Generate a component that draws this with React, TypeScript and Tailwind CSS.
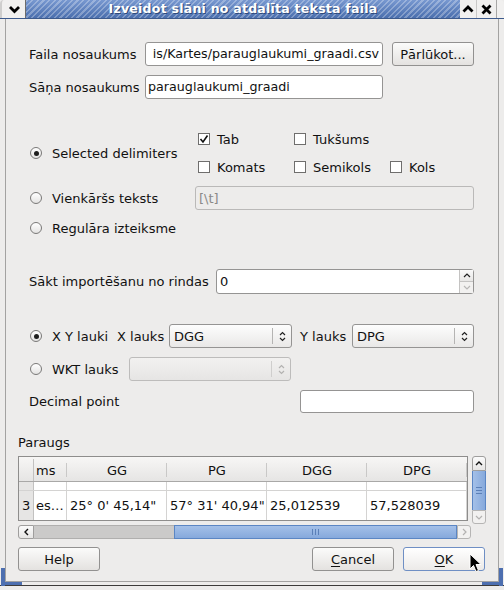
import React from "react";

const FONT = "font-['DejaVu_Sans',sans-serif]";

function Radio({ checked }: { checked?: boolean }) {
  return (
    <span className="ml-[1px] w-[12px] h-[12px] shrink-0 rounded-full border border-[#7a7978] bg-gradient-to-b from-[#ffffff] to-[#e4e3e2] flex items-center justify-center">
      {checked && <span className="w-[5px] h-[5px] rounded-full bg-[#1e1e1e]" />}
    </span>
  );
}

function Check({ checked, label }: { checked?: boolean; label: string }) {
  return (
    <div className="w-[96px] shrink-0 flex items-center">
      <span className="w-[12px] h-[12px] shrink-0 border border-[#6f6e6d] bg-white flex items-center justify-center">
        {checked && (
          <svg width="10" height="10" viewBox="0 0 10 10">
            <path d="M1.5 5 L4 8 L8.5 1.5" stroke="#111" strokeWidth="1.6" fill="none" />
          </svg>
        )}
      </span>
      <span className="ml-[7px]">{label}</span>
    </div>
  );
}

function UpDown({ color = "#222" }: { color?: string }) {
  return (
    <svg width="7" height="11" viewBox="0 0 7 11">
      <path d="M1 4 L3.5 1.5 L6 4 M1 7 L3.5 9.5 L6 7" stroke={color} strokeWidth="1.2" fill="none" />
    </svg>
  );
}

function Combo({ w, text, disabled }: { w: string; text?: string; disabled?: boolean }) {
  return (
    <div
      className={`${w} shrink-0 h-[24px] rounded-[3px] border flex items-center ${
        disabled
          ? "border-[#bdbcbb] bg-gradient-to-b from-[#f2f1f0] to-[#e6e5e4]"
          : "border-[#959493] bg-gradient-to-b from-[#fdfdfd] to-[#e9e8e7]"
      }`}
    >
      <span className="flex-1 pl-[4px]">{text}</span>
      <span className={`w-px h-[16px] ${disabled ? "bg-[#cfcecd]" : "bg-[#b5b4b3]"}`} />
      <span className="w-[18px] flex justify-center">
        <UpDown color={disabled ? "#b3b2b1" : "#222"} />
      </span>
    </div>
  );
}

function Btn({ w, children, focus }: { w: string; children: React.ReactNode; focus?: boolean }) {
  return (
    <div
      className={`${w} h-[24px] rounded-[3px] border flex items-center justify-center ${
        focus
          ? "border-[#6f8fc4] bg-gradient-to-b from-[#ffffff] to-[#eceae8]"
          : "border-[#929190] bg-gradient-to-b from-[#fbfbfa] to-[#e4e2e0]"
      }`}
    >
      {children}
    </div>
  );
}

function Cursor() {
  return (
    <svg className="absolute left-[469px] top-[553px]" width="13" height="20" viewBox="0 0 13 20">
      <path d="M1 1 L1 16 L4.5 12.5 L7 18.5 L9.5 17.5 L7 11.5 L12 11.5 Z" fill="#000" stroke="#fff" strokeWidth="1" />
    </svg>
  );
}

export default function App() {
  return (
    <div className={`${FONT} relative w-[504px] h-[590px] bg-[#edeceb] text-[13px] text-[#111] overflow-hidden flex flex-col leading-none`}>
      {/* title bar */}
      <div className="h-[19px] flex shrink-0 border-b border-[#3d5a8c]">
        <div className="w-[26px] bg-[#f1f0ef] border-r border-[#6d6c6b] flex items-center justify-end pr-[4px] rounded-tl-[4px] border-l-[2px] border-l-[#cfcecd]">
          <svg width="13" height="9" viewBox="0 0 13 9">
            <path d="M2 2 L6.5 6.5 L11 2" stroke="#000" strokeWidth="2.8" fill="none" />
          </svg>
        </div>
        <div className="flex-1 flex items-center justify-center bg-[repeating-linear-gradient(135deg,rgba(255,255,255,0.28)_0px,rgba(255,255,255,0.28)_1.5px,transparent_1.5px,transparent_4px),linear-gradient(#7898d0,#4b6fae)]">
          <span className="text-white font-bold text-[12.5px] tracking-[0.25px] [text-shadow:1px_1px_0_#2e4a7c]">
            Izveidot slāni no atdalīta teksta faila
          </span>
        </div>
        <div className="w-[44px] bg-[#f1f0ef] flex rounded-tr-[4px]">
          <div className="w-[17px] flex items-center justify-center border-r border-[#c9c8c7]">
            <svg width="12" height="8" viewBox="0 0 12 8">
              <path d="M1.5 6.5 L6 2 L10.5 6.5" stroke="#000" strokeWidth="2.8" fill="none" />
            </svg>
          </div>
          <div className="w-[20px] flex items-center justify-center border-r border-[#a8a7a6]">
            <svg width="11" height="11" viewBox="0 0 11 11">
              <path d="M1.5 1.5 L9.5 9.5 M9.5 1.5 L1.5 9.5" stroke="#000" strokeWidth="2.8" fill="none" />
            </svg>
          </div>
        </div>
      </div>

      {/* body */}
      <div className="mx-[5px] h-[563px] border-x border-b border-[#a3a2a1] flex flex-col">
        <div className="px-[23px] flex flex-col">
          {/* file row */}
          <div className="mt-[23px] h-[24px] flex items-center">
            <span className="w-[116px] shrink-0">Faila nosaukums</span>
            <div className="w-[238px] shrink-0 h-[24px] rounded-[3px] border border-[#959493] bg-white flex items-center justify-end overflow-hidden pr-[3px] text-[12.7px]">
              <span className="whitespace-nowrap">is/Kartes/parauglaukumi_graadi.csv</span>
            </div>
            <div className="ml-[9px]">
              <Btn w="w-[82px]">Pārlūkot...</Btn>
            </div>
          </div>
          {/* layer name */}
          <div className="mt-[9px] h-[24px] flex items-center">
            <span className="w-[116px] shrink-0">Sāņa nosaukums</span>
            <div className="w-[238px] shrink-0 h-[24px] rounded-[3px] border border-[#959493] bg-white flex items-center pl-[2px] text-[12.7px]">
              <span>parauglaukumi_graadi</span>
            </div>
          </div>

          {/* delimiters */}
          <div className="mt-[31px] flex items-center">
            <div className="w-[169px] shrink-0 flex items-center">
              <Radio checked />
              <span className="ml-[10px]">Selected delimiters</span>
            </div>
            <div className="flex flex-col">
              <div className="h-[18px] flex items-center">
                <Check checked label="Tab" />
                <Check label="Tukšums" />
              </div>
              <div className="mt-[10px] h-[18px] flex items-center">
                <Check label="Komats" />
                <Check label="Semikols" />
                <div className="flex items-center">
                  <span className="w-[12px] h-[12px] shrink-0 border border-[#6f6e6d] bg-white" />
                  <span className="ml-[7px]">Kols</span>
                </div>
              </div>
            </div>
          </div>
          <div className="mt-[10px] h-[24px] flex items-center">
            <div className="w-[166px] shrink-0 flex items-center">
              <Radio />
              <span className="ml-[10px]">Vienkāršs teksts</span>
            </div>
            <div className="w-[279px] shrink-0 h-[24px] rounded-[3px] border border-[#bab9b8] bg-[#edeceb] flex items-center pl-[3px] text-[#8a8988]">
              [\t]
            </div>
          </div>
          <div className="mt-[8px] h-[20px] flex items-center">
            <Radio />
            <span className="ml-[10px]">Regulāra izteiksme</span>
          </div>

          {/* start row */}
          <div className="mt-[31px] h-[25px] flex items-center">
            <span className="w-[187px] shrink-0">Sākt importēšanu no rindas</span>
            <div className="w-[258px] shrink-0 h-[25px] rounded-[3px] border border-[#959493] bg-white flex items-stretch">
              <span className="flex-1 flex items-center pl-[3px]">0</span>
              <div className="w-[14px] flex flex-col border-l border-[#c4c3c2]">
                <div className="flex-1 flex items-center justify-center bg-gradient-to-b from-[#fafafa] to-[#e8e7e6] border-b border-[#c4c3c2]">
                  <svg width="8" height="5" viewBox="0 0 8 5">
                    <path d="M1 4 L4 1 L7 4" stroke="#222" strokeWidth="1.2" fill="none" />
                  </svg>
                </div>
                <div className="flex-1 flex items-center justify-center bg-[#f2f1f0]">
                  <svg width="8" height="5" viewBox="0 0 8 5">
                    <path d="M1 1 L4 4 L7 1" stroke="#b8b7b6" strokeWidth="1.2" fill="none" />
                  </svg>
                </div>
              </div>
            </div>
          </div>

          {/* XY row */}
          <div className="mt-[30px] h-[24px] flex items-center">
            <div className="w-[88px] shrink-0 flex items-center">
              <Radio checked />
              <span className="ml-[10px]">X Y lauki</span>
            </div>
            <span className="w-[52px] shrink-0">X lauks</span>
            <Combo w="w-[123px]" text="DGG" />
            <span className="w-[60px] shrink-0 pl-[8px]">Y lauks</span>
            <Combo w="w-[122px]" text="DPG" />
          </div>
          <div className="mt-[9px] h-[24px] flex items-center">
            <div className="w-[100px] shrink-0 flex items-center">
              <Radio />
              <span className="ml-[10px]">WKT lauks</span>
            </div>
            <Combo w="w-[162px]" disabled />
          </div>
          <div className="mt-[9px] h-[23px] flex items-center">
            <span className="w-[271px] shrink-0">Decimal point</span>
            <div className="w-[174px] shrink-0 h-[23px] rounded-[3px] border border-[#959493] bg-white" />
          </div>
        </div>

        {/* preview */}
        <div className="px-[12px] flex flex-col">
          <div className="mt-[21px] h-[16px] flex items-center">Paraugs</div>
          <div className="mt-[6px] h-[68px] flex">
            {/* table */}
            <div className="w-[450px] h-[65px] border border-[#8e8d8c] bg-white flex flex-col overflow-hidden">
              <div className="h-[25px] pt-[2px] flex border-b border-[#a9a8a7] bg-gradient-to-b from-[#f7f6f5] to-[#e6e5e4]">
                <div className="w-[15px] border-r border-[#c2c1c0]" />
                <div className="w-[33px] flex items-center pl-[2px] relative">
                  ms
                  <span className="absolute right-0 top-[4px] bottom-[4px] w-px bg-[#c9c8c7]" />
                </div>
                {["GG", "PG", "DGG", "DPG"].map((h) => (
                  <div key={h} className="w-[100px] flex items-center justify-center relative">
                    {h}
                    <span className="absolute right-0 top-[4px] bottom-[4px] w-px bg-[#c9c8c7]" />
                  </div>
                ))}
              </div>
              <div className="h-[9px] flex border-b border-[#d4d3d2]">
                <div className="w-[15px] bg-[#e6e5e4] border-r border-[#c2c1c0]" />
                <div className="w-[33px] border-r border-[#d4d3d2]" />
                <div className="w-[100px] border-r border-[#d4d3d2]" />
                <div className="w-[100px] border-r border-[#d4d3d2]" />
                <div className="w-[100px] border-r border-[#d4d3d2]" />
                <div className="w-[100px] border-r border-[#d4d3d2]" />
              </div>
              <div className="flex-1 flex">
                <div className="w-[15px] bg-[#e6e5e4] border-r border-[#c2c1c0] flex items-center pl-[3px]">3</div>
                <div className="w-[33px] border-r border-[#d4d3d2] flex items-center pl-[2px]">
                  <span className="whitespace-nowrap">es…</span>
                </div>
                <div className="w-[100px] border-r border-[#d4d3d2] flex items-center pl-[3px] whitespace-nowrap">25° 0' 45,14"</div>
                <div className="w-[100px] border-r border-[#d4d3d2] flex items-center pl-[3px] whitespace-nowrap">57° 31' 40,94"</div>
                <div className="w-[100px] border-r border-[#d4d3d2] flex items-center pl-[3px]">25,012539</div>
                <div className="w-[100px] border-r border-[#d4d3d2] flex items-center pl-[3px]">57,528039</div>
              </div>
            </div>
            {/* vertical scrollbar */}
            <div className="ml-[4px] w-[14px] h-[68px] flex flex-col">
              <div className="h-[15px] rounded-t-[3px] border border-[#9f9e9d] bg-gradient-to-b from-[#fbfbfb] to-[#e6e5e4] flex items-center justify-center">
                <svg width="8" height="5" viewBox="0 0 8 5">
                  <path d="M1 4 L4 1 L7 4" stroke="#111" strokeWidth="1.4" fill="none" />
                </svg>
              </div>
              <div className="h-[39px] border-x border-[#5b86c4] bg-gradient-to-r from-[#a4c0e8] to-[#86a9dc] flex flex-col items-center justify-center gap-[2px]">
                <span className="w-[6px] h-px bg-[#5b80b8]" />
                <span className="w-[6px] h-px bg-[#5b80b8]" />
                <span className="w-[6px] h-px bg-[#5b80b8]" />
              </div>
              <div className="h-[14px] rounded-b-[3px] border border-[#b6b5b4] bg-[#f2f1f0] flex items-center justify-center">
                <svg width="8" height="5" viewBox="0 0 8 5">
                  <path d="M1 1 L4 4 L7 1" stroke="#b3b2b1" strokeWidth="1.2" fill="none" />
                </svg>
              </div>
            </div>
          </div>
          {/* horizontal scrollbar */}
          <div className="mt-[1px] w-[453px] h-[14px] flex">
            <div className="w-[16px] rounded-l-[3px] border border-[#9f9e9d] bg-gradient-to-b from-[#fbfbfb] to-[#e6e5e4] flex items-center justify-center">
              <svg width="5" height="8" viewBox="0 0 5 8">
                <path d="M4 1 L1 4 L4 7" stroke="#111" strokeWidth="1.4" fill="none" />
              </svg>
            </div>
            <div className="w-[140px] bg-[#cbcac9] border-y border-[#b0afae]" />
            <div className="w-[283px] border border-[#5b86c4] bg-gradient-to-b from-[#a4c0e8] to-[#86a9dc] flex items-center justify-center gap-[2px]">
              <span className="w-px h-[6px] bg-[#5b80b8]" />
              <span className="w-px h-[6px] bg-[#5b80b8]" />
              <span className="w-px h-[6px] bg-[#5b80b8]" />
            </div>
            <div className="w-[14px] rounded-r-[3px] border border-[#b6b5b4] bg-[#f2f1f0] flex items-center justify-center">
              <svg width="5" height="8" viewBox="0 0 5 8">
                <path d="M1 1 L4 4 L1 7" stroke="#b3b2b1" strokeWidth="1.2" fill="none" />
              </svg>
            </div>
          </div>
          {/* buttons */}
          <div className="mt-[8px] h-[24px] flex">
            <Btn w="w-[82px]">Help</Btn>
            <div className="flex-1" />
            <Btn w="w-[82px]">
              <span><span className="underline underline-offset-2">C</span>ancel</span>
            </Btn>
            <div className="ml-[9px] mr-[1px]">
              <Btn w="w-[82px]" focus>
                <span><span className="underline underline-offset-2">O</span>K</span>
              </Btn>
            </div>
          </div>
        </div>
      </div>

      {/* window bottom frame */}
      <div className="absolute left-0 bottom-[4px] w-full h-px bg-[#3c3b3a]" />
      <div className="absolute left-[1px] top-[568px] w-[4px] h-[18px] bg-[#4d6fb0]" />
      <div className="absolute left-[1px] top-[582px] w-[21px] h-[3px] bg-[#4d6fb0]" />
      <div className="absolute right-[1px] top-[568px] w-[4px] h-[18px] bg-[#4d6fb0]" />
      <div className="absolute right-[1px] top-[582px] w-[21px] h-[3px] bg-[#4d6fb0]" />
      <Cursor />
    </div>
  );
}
